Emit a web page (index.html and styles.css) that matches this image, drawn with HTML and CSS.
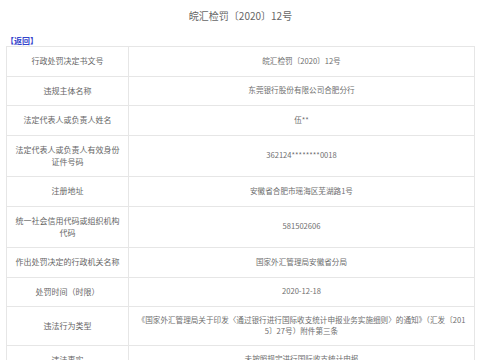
FILE: index.html
```html
<!DOCTYPE html>
<html lang="zh-CN">
<head>
<meta charset="utf-8">
<title>皖汇检罚〔2020〕12号</title>
<link rel="stylesheet" href="styles.css">
</head>
<body>
<div class="title">皖汇检罚〔2020〕12号</div>
<div class="back"><a href="#">【返回】</a></div>
<table class="info">
<colgroup><col class="c-label"><col class="c-value"></colgroup>
<tbody>
<tr><td class="label">行政处罚决定书文号</td><td class="value">皖汇检罚〔2020〕12号</td></tr>
<tr><td class="label">违规主体名称</td><td class="value">东莞银行股份有限公司合肥分行</td></tr>
<tr><td class="label">法定代表人或负责人姓名</td><td class="value">伍**</td></tr>
<tr><td class="label">法定代表人或负责人有效身份证件号码</td><td class="value">362124********0018</td></tr>
<tr><td class="label">注册地址</td><td class="value">安徽省合肥市瑶海区芜湖路1号</td></tr>
<tr><td class="label">统一社会信用代码或组织机构代码</td><td class="value">581502606</td></tr>
<tr><td class="label">作出处罚决定的行政机关名称</td><td class="value">国家外汇管理局安徽省分局</td></tr>
<tr><td class="label">处罚时间（时限）</td><td class="value">2020-12-18</td></tr>
<tr><td class="label">违法行为类型</td><td class="value">《国家外汇管理局关于印发〈通过银行进行国际收支统计申报业务实施细则〉的通知》（汇发〔2015〕27号）附件第三条</td></tr>
<tr><td class="label">违法事实</td><td class="value">未按照规定进行国际收支统计申报</td></tr>
</tbody>
</table>
</body>
</html>
```
FILE: styles.css
```css
html, body {
  margin: 0;
  background: #ffffff;
}
body {
  padding: 10px 5px 0 6px;
  font-family: "Noto Sans CJK SC", "Noto Sans", sans-serif;
  color: #666666;
}
.title {
  text-align: center;
  font-size: 10px;
  line-height: 12px;
  color: #666666;
  margin-bottom: 14px;
}
.back {
  font-size: 8px;
  line-height: 10px;
  font-weight: bold;
}
.back a {
  color: #3344cc;
  text-decoration: none;
}
.info {
  width: 469px;
  border-collapse: collapse;
  table-layout: fixed;
}
.c-label { width: 122px; }
.info td {
  border: 1px solid #e6e6e6;
  text-align: center;
  vertical-align: middle;
  padding: 8px 7px 8.5px 7px;
}
.label {
  font-size: 8px;
  line-height: 12px;
  padding-left: 6px;
  padding-right: 6px;
  color: #666666;
}
.value {
  font-size: 7.6px;
  line-height: 10.5px;
  color: #6e6e6e;
  word-break: break-all;
}
```
